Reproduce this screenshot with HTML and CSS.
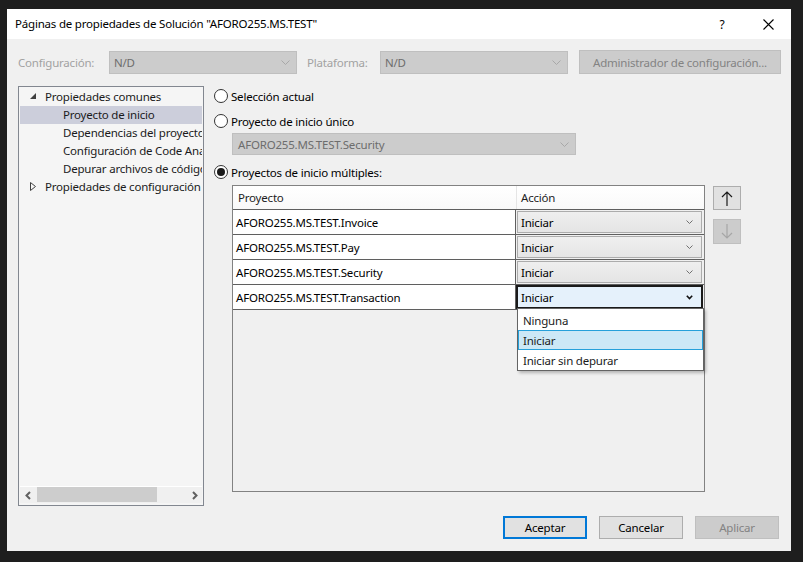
FILE: index.html
```html
<!DOCTYPE html>
<html lang="es">
<head>
<meta charset="utf-8">
<title>Páginas de propiedades</title>
<link rel="stylesheet" href="styles.css">
</head>
<body>
<div class="screen">
  <div class="dialog">
    <div class="titlebar">
      <span class="title">Páginas de propiedades de Solución "AFORO255.MS.TEST"</span>
      <span class="tb-btn help">?</span>
      <span class="tb-btn close">
        <svg width="11" height="11" viewBox="0 0 11 11"><path d="M0.5 0.5 L10.5 10.5 M10.5 0.5 L0.5 10.5" stroke="#000" stroke-width="1.1" fill="none"/></svg>
      </span>
    </div>

    <div class="config-row">
      <span class="label lbl-config">Configuración:</span>
      <div class="combo dis w-cfg"><span>N/D</span><svg class="chev" width="9" height="5" viewBox="0 0 9 5"><path d="M0.5 0.5 L4.5 4.5 L8.5 0.5" stroke="#a8a8a8" fill="none"/></svg></div>
      <span class="label lbl-plat">Plataforma:</span>
      <div class="combo dis w-plat"><span>N/D</span><svg class="chev" width="9" height="5" viewBox="0 0 9 5"><path d="M0.5 0.5 L4.5 4.5 L8.5 0.5" stroke="#a8a8a8" fill="none"/></svg></div>
      <div class="btn btn-dis btn-admin">Administrador de configuración...</div>
    </div>

    <div class="main">
      <div class="tree">
        <div class="tree-items">
          <div class="tree-row lvl0">
            <svg class="twisty" width="6" height="6" viewBox="0 0 6 6"><path d="M6 0 L6 6 L0 6 Z" fill="#404040"/></svg>
            <span>Propiedades comunes</span>
          </div>
          <div class="tree-row lvl1 sel"><span>Proyecto de inicio</span></div>
          <div class="tree-row lvl1"><span>Dependencias del proyecto</span></div>
          <div class="tree-row lvl1"><span>Configuración de Code Analysis</span></div>
          <div class="tree-row lvl1"><span>Depurar archivos de código fuente</span></div>
          <div class="tree-row lvl0">
            <svg class="twisty" width="6" height="9" viewBox="0 0 6 9"><path d="M0.5 0.5 L5.5 4.5 L0.5 8.5 Z" fill="none" stroke="#404040"/></svg>
            <span>Propiedades de configuración</span>
          </div>
        </div>
        <div class="hscroll">
          <svg class="sarrow" width="6" height="9" viewBox="0 0 6 9"><path d="M5 1 L1.5 4.5 L5 8" stroke="#606060" stroke-width="2" fill="none"/></svg>
          <div class="track"><div class="thumb"></div></div>
          <svg class="sarrow" width="6" height="9" viewBox="0 0 6 9"><path d="M1 1 L4.5 4.5 L1 8" stroke="#606060" stroke-width="2" fill="none"/></svg>
        </div>
      </div>

      <div class="content">
        <label class="radio-row r1"><span class="radio"></span><span>Selección actual</span></label>
        <label class="radio-row r2"><span class="radio"></span><span>Proyecto de inicio único</span></label>
        <div class="combo dis w-single"><span>AFORO255.MS.TEST.Security</span><svg class="chev" width="9" height="5" viewBox="0 0 9 5"><path d="M0.5 0.5 L4.5 4.5 L8.5 0.5" stroke="#a8a8a8" fill="none"/></svg></div>
        <label class="radio-row r3"><span class="radio checked"></span><span>Proyectos de inicio múltiples:</span></label>

        <div class="grid-area">
          <div class="table">
            <div class="thead">
              <div class="th th-proj">Proyecto</div>
              <div class="th th-act">Acción</div>
            </div>
            <div class="trow">
              <div class="td-proj">AFORO255.MS.TEST.Invoice</div>
              <div class="td-act"><div class="cell-combo"><span>Iniciar</span><svg class="chev" width="7" height="4" viewBox="0 0 7 4"><path d="M0.5 0.5 L3.5 3.5 L6.5 0.5" stroke="#707070" fill="none"/></svg></div></div>
            </div>
            <div class="trow">
              <div class="td-proj">AFORO255.MS.TEST.Pay</div>
              <div class="td-act"><div class="cell-combo"><span>Iniciar</span><svg class="chev" width="7" height="4" viewBox="0 0 7 4"><path d="M0.5 0.5 L3.5 3.5 L6.5 0.5" stroke="#707070" fill="none"/></svg></div></div>
            </div>
            <div class="trow">
              <div class="td-proj">AFORO255.MS.TEST.Security</div>
              <div class="td-act"><div class="cell-combo"><span>Iniciar</span><svg class="chev" width="7" height="4" viewBox="0 0 7 4"><path d="M0.5 0.5 L3.5 3.5 L6.5 0.5" stroke="#707070" fill="none"/></svg></div></div>
            </div>
            <div class="trow last">
              <div class="td-proj">AFORO255.MS.TEST.Transaction</div>
              <div class="td-act"><div class="cell-combo focus"><span>Iniciar</span><svg class="chev" width="7" height="5" viewBox="0 0 7 5"><path d="M0.8 0.8 L3.5 3.5 L6.2 0.8" stroke="#111" stroke-width="1.6" fill="none"/></svg></div></div>
            </div>

            <div class="dropdown">
              <div class="dd-item">Ninguna</div>
              <div class="dd-item dd-sel">Iniciar</div>
              <div class="dd-item">Iniciar sin depurar</div>
            </div>
          </div>

          <div class="updown">
            <div class="ud-btn up">
              <svg width="12" height="15" viewBox="0 0 12 15"><path d="M6 1 L6 15 M1 6 L6 1 L11 6" stroke="#1a1a1a" stroke-width="1.2" fill="none"/></svg>
            </div>
            <div class="ud-btn down">
              <svg width="12" height="15" viewBox="0 0 12 15"><path d="M6 0 L6 14 M1 9 L6 14 L11 9" stroke="#a6a6a6" stroke-width="1.2" fill="none"/></svg>
            </div>
          </div>
        </div>
      </div>
    </div>

    <div class="footer">
      <div class="btn btn-default">Aceptar</div>
      <div class="btn">Cancelar</div>
      <div class="btn btn-dis">Aplicar</div>
    </div>
  </div>
</div>
</body>
</html>
```

FILE: styles.css
```css
* { box-sizing: border-box; }
html, body { margin: 0; padding: 0; }
body {
  background: #1e1e1e;
  width: 803px;
  height: 562px;
  overflow: hidden;
  font-family: "Segoe UI", "Noto Sans", sans-serif;
  font-size: 11.5px;
  letter-spacing: -0.2px;
  color: #000;
}
.screen { padding: 9px 0 0 7px; }
.dialog {
  width: 784px;
  height: 542px;
  background: #f0f0f0;
  display: flex;
  flex-direction: column;
}

/* title bar */
.titlebar {
  height: 30px;
  background: #fff;
  display: flex;
  align-items: center;
  padding-left: 8px;
}
.title { flex: 1; white-space: nowrap; padding-bottom: 1px; }
.tb-btn {
  width: 46px;
  height: 30px;
  display: flex;
  align-items: center;
  justify-content: center;
}
.help { font-size: 12px; }

/* config row */
.config-row {
  margin-top: 11px;
  height: 24px;
  display: flex;
  align-items: center;
  padding-left: 11px;
}
.label { color: #a2a2a2; white-space: nowrap; }
.lbl-config { width: 91px; }
.lbl-plat { width: 73px; margin-left: 10px; }
.combo {
  height: 23px;
  display: flex;
  align-items: center;
  justify-content: space-between;
  padding: 0 6px 0 4px;
  border: 1px solid #bfbfbf;
}
.combo.dis { background: #cccccc; color: #6d6d6d; }
.w-cfg, .w-plat { width: 188px; }
.btn {
  height: 24px;
  width: 84px;
  display: flex;
  align-items: center;
  justify-content: center;
  background: #e1e1e1;
  border: 1px solid #adadad;
  color: #000;
  white-space: nowrap;
}
.btn-dis { background: #cccccc; border-color: #bfbfbf; color: #838383; }
.btn-admin { width: 202px; margin-left: 11px; }
.btn-default { border: 2px solid #0078d7; }

/* main area */
.main {
  margin-top: 12px;
  display: flex;
  align-items: flex-start;
}
.tree {
  margin-left: 11px;
  width: 186px;
  height: 420px;
  border: 1px solid #828790;
  background: #f5f5f5;
  display: flex;
  flex-direction: column;
  padding: 1px;
}
.tree-items { flex: 1; overflow: hidden; }
.tree-row {
  height: 18px;
  display: flex;
  align-items: center;
  white-space: nowrap;
  overflow: hidden;
  color: #1b1b1b;
  padding-bottom: 2px;
}
.tree-row.lvl0 { padding-left: 10px; }
.tree-row.lvl0 .twisty { margin-right: 9px; flex: none; }
.tree-row.lvl1 { padding-left: 43px; }
.tree-row.sel { background: #cccedb; }

.hscroll {
  height: 17px;
  margin-bottom: 1px;
  display: flex;
  align-items: center;
  background: #f0f0f0;
  border-top: 1px solid #ffffff;
}
.sarrow { flex: none; margin: 0 6px 0 5px; }
.track { flex: 1; height: 16px; display: flex; }
.thumb { width: 120px; height: 15px; background: #cdcdcd; }
.hscroll .sarrow:last-child { margin: 0 6px 0 35px; }

.content {
  margin-left: 10px;
  padding-top: 1px;
  display: flex;
  flex-direction: column;
}
.radio-row {
  height: 18px;
  display: flex;
  align-items: center;
  white-space: nowrap;
}
.radio {
  width: 14px;
  height: 14px;
  border: 1px solid #333;
  border-radius: 50%;
  background: #fff;
  margin-right: 3px;
  display: flex;
  align-items: center;
  justify-content: center;
}
.radio.checked::after {
  content: "";
  width: 8px;
  height: 8px;
  border-radius: 50%;
  background: #1a1a1a;
}
.r2 { margin-top: 7px; }
.w-single { width: 344px; margin-left: 18px; margin-top: 3px; height: 22px; padding-left: 5px; }
.r3 { margin-top: 8px; }

/* grid */
.grid-area {
  margin-top: 4px;
  margin-left: 18px;
  display: flex;
  align-items: flex-start;
}
.table {
  position: relative;
  width: 473px;
  height: 307px;
  border: 1px solid #828282;
  background: #f0f0f0;
}
.thead {
  height: 23px;
  display: flex;
  background: linear-gradient(#ffffff, #f9f9f9);
}
.th {
  display: flex;
  align-items: center;
  color: #1e1e1e;
}
.th-proj { width: 284px; padding-left: 5px; border-right: 1px solid #e5e5e5; }
.th-act { flex: 1; padding-left: 4px; }
.trow {
  height: 25px;
  display: flex;
  border-top: 1px solid #5f5f5f;
}
.trow.last { height: 26px; border-bottom: 1px solid #5f5f5f; }
.td-proj {
  width: 283px;
  background: #fff;
  display: flex;
  align-items: center;
  padding-left: 3px;
  border-right: 1px solid #5f5f5f;
  white-space: nowrap;
}
.td-act { width: 187px; padding: 1px; }
.cell-combo {
  height: 22px;
  display: flex;
  align-items: center;
  justify-content: space-between;
  padding: 0 8px 0 3px;
  background: linear-gradient(#efefef, #e5e5e5);
  border: 1px solid #acacac;
}
.cell-combo.focus {
  margin: -1px;
  height: 24px;
  background: #e5f1fb;
  border: 2px solid #1a1a1a;
  padding: 0 8px 0 3px;
}

.dropdown {
  position: absolute;
  left: 284px;
  top: 122px;
  width: 187px;
  height: 63px;
  background: #fff;
  border: 1px solid #646464;
  box-shadow: 2px 2px 3px rgba(0, 0, 0, 0.25);
  padding-top: 1px;
}
.dd-item {
  height: 20px;
  display: flex;
  align-items: center;
  padding-left: 5px;
  color: #1b1b1b;
  white-space: nowrap;
}
.dd-sel { background: #cce8f6; border: 1px solid #26a0da; padding-left: 4px; }

.updown {
  margin-left: 8px;
  margin-top: 1px;
  display: flex;
  flex-direction: column;
}
.ud-btn {
  width: 28px;
  height: 24px;
  display: flex;
  align-items: center;
  justify-content: center;
  background: #e1e1e1;
  border: 1px solid #adadad;
}
.ud-btn.down {
  margin-top: 9px;
  height: 25px;
  background: #cccccc;
  border-color: #bfbfbf;
}

/* footer */
.footer {
  margin-top: 10px;
  display: flex;
  justify-content: flex-end;
  gap: 12px;
  padding-right: 12px;
}
.footer .btn { height: 23px; }
```
